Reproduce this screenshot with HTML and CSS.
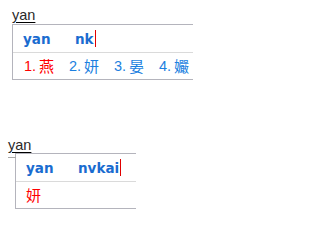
FILE: index.html
```html
<!DOCTYPE html>
<html lang="zh">
<head>
<meta charset="utf-8">
<title>IME</title>
<link rel="stylesheet" href="styles.css">
</head>
<body>
<section class="ime ime-a">
  <div class="comp"><span class="comp-text">yan</span></div>
  <div class="panel panel-a">
    <div class="row spell"><span class="py">yan</span><span class="keys">nk</span><i class="caret"></i></div>
    <div class="row cands">
      <span class="cand sel"><span class="num">1.</span><span class="ch">燕</span></span>
      <span class="cand"><span class="num">2.</span><span class="ch">妍</span></span>
      <span class="cand"><span class="num">3.</span><span class="ch">晏</span></span>
      <span class="cand"><span class="num">4.</span><span class="ch">孍</span></span>
    </div>
  </div>
</section>
<section class="ime ime-b">
  <div class="comp"><span class="comp-text">yan</span></div>
  <div class="panel panel-b">
    <div class="row spell"><span class="py">yan</span><span class="keys">nvkai</span><i class="caret"></i></div>
    <div class="row cands">
      <span class="cand sel"><span class="ch">妍</span></span>
    </div>
  </div>
</section>
</body>
</html>
```
FILE: styles.css
```css
html, body {
  margin: 0;
  padding: 0;
  background: #fff;
}
body {
  width: 205px;
  height: 220px;
  overflow: hidden;
  font-family: "Liberation Sans", Arial, sans-serif;
}
.ime {
  position: relative;
}
.comp {
  height: 16px;
  line-height: 16px;
  font-size: 14.5px;
  color: #2a2a2a;
}
.comp-text {
  text-decoration: underline;
  text-decoration-color: #000;
  text-underline-offset: 2px;
}
.ime-a {
  padding-top: 7px;
}
.ime-a .comp {
  padding-left: 12px;
  margin-bottom: 1px;
}
.ime-b {
  margin-top: 57px;
}
.ime-b .comp {
  padding-left: 8px;
  margin-bottom: 0;
}
.ime-b::before {
  content: "";
  position: absolute;
  left: 8px;
  top: 20px;
  width: 8px;
  height: 1px;
  background: #a8a8a8;
}
.panel {
  border-top: 1px solid #b4b4bc;
  border-left: 1px solid #b4b4bc;
  border-bottom: 1px solid #b4b4bc;
  background: #fff;
}
.panel-a {
  margin-left: 12px;
  width: 180px;
}
.panel-b {
  margin-left: 15px;
  width: 120px;
}
.row {
  display: flex;
  align-items: center;
}
.spell {
  height: 27px;
  padding-left: 10px;
  border-bottom: 1px solid #dadada;
  font-family: "DejaVu Sans", Verdana, sans-serif;
  font-weight: bold;
  font-size: 13.5px;
  color: #1a6cd0;
}
.py {
  width: 52px;
}
.caret {
  width: 1px;
  height: 17px;
  margin-left: 1px;
  background: #e00000;
}
.cands {
  height: 26px;
  padding-left: 11px;
  gap: 15px;
  color: #1b7fe0;
  font-size: 15px;
}
.ime-b .cands {
  padding-left: 10px;
}
.cand {
  display: flex;
  align-items: center;
}
.cand.sel {
  color: #ff0000;
}
.num {
  width: 15px;
  font-family: "Liberation Sans", Arial, sans-serif;
  font-size: 14.5px;
}
.ch {
  width: 15px;
  font-family: "Noto Sans CJK SC", "Noto Sans CJK TC", sans-serif;
  font-size: 15px;
  line-height: 18px;
}
```
